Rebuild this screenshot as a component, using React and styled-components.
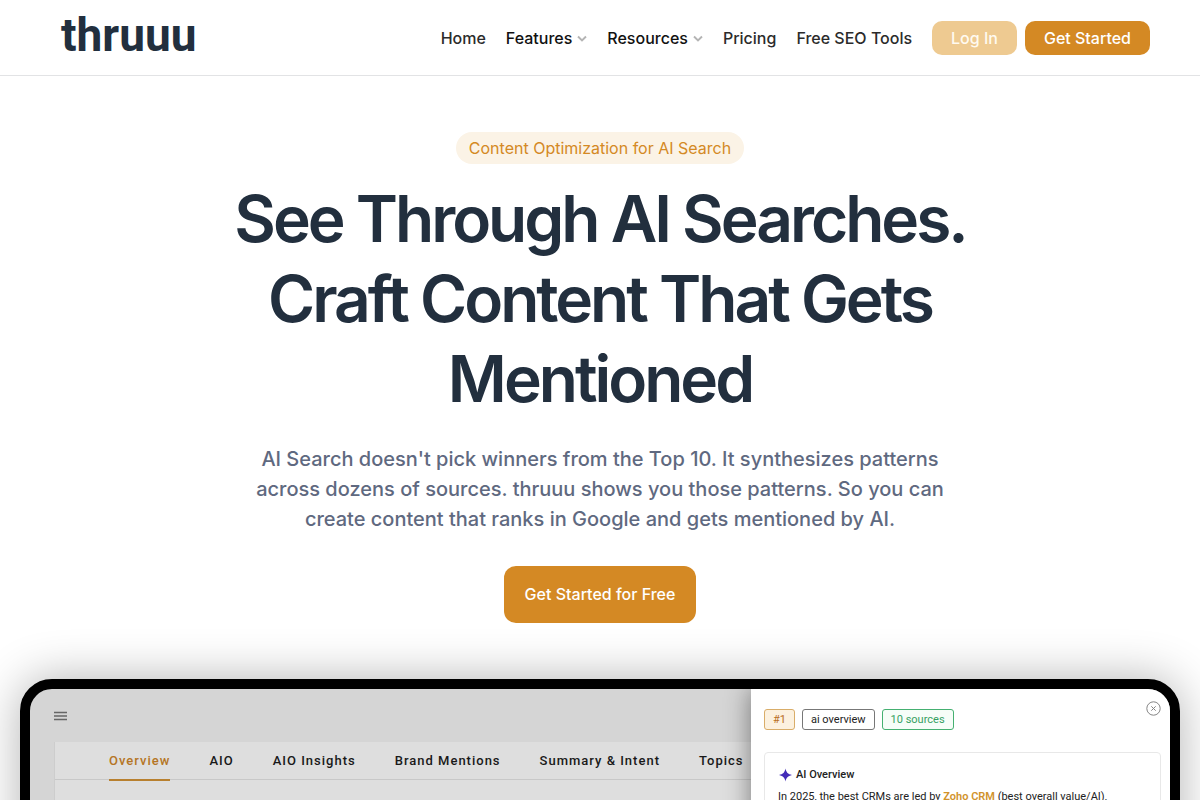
import styled, {createGlobalStyle} from "styled-components";

const GlobalStyle = createGlobalStyle`
    * {
        box-sizing: border-box;
    }

    body {
        margin: 0;
        background-color: #fff;
        color: #222f3e;
        font-family: Inter, "Liberation Sans", sans-serif;
        font-size: 16px;
        overflow-x: hidden;
    }

    button {
        font: inherit;
        cursor: pointer;
    }
`

const Header = styled.header`
    display: flex;
    align-items: center;
    justify-content: space-between;
    height: 76px;
    padding: 0 50px 0 61px;
    border-bottom: 1px solid #e2e3e5;
`

const Logo = styled.a`
    color: #222f3e;
    font-family: Roboto, sans-serif;
    font-size: 46px;
    font-weight: 700;
    line-height: 56px;
    padding-bottom: 6px;
    text-decoration: none;
`

const Nav = styled.nav`
    display: flex;
    align-items: center;
    gap: 20px;
`

const NavLink = styled.a`
    color: #2b2b2b;
    font-weight: 500;
    line-height: 24px;
    text-decoration: none;
`

const NavMenu = styled.button`
    display: flex;
    align-items: center;
    gap: 5px;
    padding: 0;
    border: none;
    background: none;
    color: #111;
    font-weight: 500;
    line-height: 24px;

    & svg {
        width: 10px;
        height: 10px;
    }
`

const Actions = styled.div`
    display: flex;
    gap: 8px;
`

const Button = styled.button`
    height: 34px;
    padding: 0 19px;
    border: none;
    border-radius: 10px;
    background-color: ${props => props.$muted ? "#eeca91" : "#d48924"};
    color: ${props => props.$muted ? "#fffaf0" : "#fff"};
    font-weight: 500;
    white-space: nowrap;
`

const LargeButton = styled(Button)`
    height: 57px;
    padding: 0 21px 2px;
    border-radius: 12px;
`

const Hero = styled.section`
    display: flex;
    flex-direction: column;
    align-items: center;
    padding: 56px 24px;
    text-align: center;
`

const Pill = styled.p`
    margin: 0;
    padding: 4px 13px;
    border-radius: 16px;
    background-color: #fbf3e6;
    color: #d48924;
    line-height: 24px;
`

const Title = styled.h1`
    max-width: 800px;
    margin: 15px 0 0;
    font-size: 64px;
    font-weight: 600;
    letter-spacing: -3px;
    line-height: 80px;
`

const Lead = styled.p`
    max-width: 700px;
    margin: 25px 0 32px;
    color: #5f6980;
    font-size: 20px;
    font-weight: 500;
    line-height: 30px;
`

const Device = styled.section`
    display: grid;
    grid-template-columns: 721fr 419fr;
    min-height: 600px;
    margin: 0 20px 40px;
    border: 10px solid #000;
    border-radius: 32px;
    background-color: #d5d5d5;
    box-shadow: 0 0 48px rgba(0, 0, 0, 0.3);
    overflow: hidden;
    font-family: Roboto, "Liberation Sans", sans-serif;
`

const Report = styled.div`
    display: flex;
    flex-direction: column;
    padding-left: 24px;
`

const Toolbar = styled.div`
    display: flex;
    align-items: center;
    height: 53px;
`

const IconButton = styled.button`
    display: flex;
    padding: 0;
    border: none;
    background: none;
    color: #666;
`

const Board = styled.div`
    flex: 1;
    border-left: 1px solid #cdcdcd;
    background-color: #dedede;
`

const Tabs = styled.div`
    display: flex;
    gap: 39px;
    height: 38px;
    padding-left: 54px;
    border-bottom: 1px solid #c8c8c8;
`

const Tab = styled.button`
    height: 39px;
    padding: 0;
    border: none;
    border-bottom: 2px solid ${props => props.$active ? "#b8802f" : "transparent"};
    background: none;
    color: ${props => props.$active ? "#b57524" : "#191919"};
    font-size: 13px;
    font-weight: 500;
    letter-spacing: 1px;
    white-space: nowrap;
`

const Panel = styled.aside`
    z-index: 1;
    padding: 0 9px 0 13px;
    background-color: #fff;
    box-shadow: 0 0 24px rgba(0, 0, 0, 0.45);
`

const PanelHeader = styled.div`
    display: flex;
    align-items: flex-start;
    justify-content: space-between;
    height: 63px;
    padding-top: 12px;
`

const Tags = styled.div`
    display: flex;
    gap: 7px;
    padding-top: 8px;
`

const Tag = styled.span`
    height: 21px;
    padding: 0 8px;
    border: 1px solid ${props => props.$border};
    border-radius: 3px;
    background-color: ${props => props.$fill || "#fff"};
    color: ${props => props.$color};
    font-size: 11px;
    font-weight: 400;
    line-height: 19px;
`

const Card = styled.article`
    min-height: 400px;
    padding: 11px 13px;
    border: 1px solid #e8e8e8;
    border-radius: 4px;
    color: #222;
    font-size: 11px;
    line-height: 22px;

    & a {
        color: #d1932c;
        font-weight: 600;
    }
`

const CardTitle = styled.h2`
    display: flex;
    align-items: center;
    gap: 3px;
    margin: 0;
    font-size: 11px;
    font-weight: 500;
    line-height: 22px;
`

const Answer = styled.p`
    margin: 0;
`

const Chevron = () => (
    <svg viewBox="0 0 10 10" fill="none" stroke="#b4b4b4" strokeWidth="1.9" aria-hidden="true">
        <path d="M1 3.5l4 4 4-4"/>
    </svg>
);

const MenuIcon = () => (
    <svg width="13" height="10" viewBox="0 0 13 10" stroke="currentColor" strokeWidth="1.5" aria-hidden="true">
        <path d="M0 1.5h13M0 5h13M0 8.5h13"/>
    </svg>
);

const CloseIcon = () => (
    <svg width="15" height="15" viewBox="0 0 15 15" fill="none" stroke="#858585" aria-hidden="true">
        <circle cx="7.5" cy="7.5" r="6.7"/>
        <path d="M5.3 5.3l4.4 4.4M9.7 5.3l-4.4 4.4"/>
    </svg>
);

const SparkIcon = () => (
    <svg width="15" height="14" viewBox="0 0 14 14" fill="#432cb8" aria-hidden="true">
        <path d="M7 0.5C7.9 4.5 9.2 6 13.5 7C9.2 8 7.9 9.5 7 13.5C6.1 9.5 4.8 8 0.5 7C4.8 6 6.1 4.5 7 0.5Z"/>
    </svg>
);

const tabs = ["Overview", "AIO", "AIO Insights", "Brand Mentions", "Summary & Intent", "Topics"];

const App = () => {
    return (
        <>
            <GlobalStyle/>
            <Header>
                <Logo href="#">thruuu</Logo>
                <Nav>
                    <NavLink href="#">Home</NavLink>
                    <NavMenu>Features <Chevron/></NavMenu>
                    <NavMenu>Resources <Chevron/></NavMenu>
                    <NavLink href="#">Pricing</NavLink>
                    <NavLink href="#">Free SEO Tools</NavLink>
                    <Actions>
                        <Button $muted>Log In</Button>
                        <Button>Get Started</Button>
                    </Actions>
                </Nav>
            </Header>

            <main>
                <Hero>
                    <Pill>Content Optimization for AI Search</Pill>
                    <Title>See Through AI Searches. Craft Content That Gets Mentioned</Title>
                    <Lead>
                        AI Search doesn't pick winners from the Top 10. It synthesizes patterns across
                        dozens of sources. thruuu shows you those patterns. So you can create content
                        that ranks in Google and gets mentioned by AI.
                    </Lead>
                    <LargeButton>Get Started for Free</LargeButton>
                </Hero>

                <Device>
                    <Report>
                        <Toolbar>
                            <IconButton aria-label="Menu"><MenuIcon/></IconButton>
                        </Toolbar>
                        <Board>
                            <Tabs role="tablist">
                                {tabs.map((tab, index) => (
                                    <Tab key={tab} role="tab" aria-selected={index === 0} $active={index === 0}>
                                        {tab}
                                    </Tab>
                                ))}
                            </Tabs>
                        </Board>
                    </Report>

                    <Panel>
                        <PanelHeader>
                            <Tags>
                                <Tag $border="#d9ad69" $fill="#fcf1df" $color="#b96f24">#1</Tag>
                                <Tag $border="#777" $color="#222">ai overview</Tag>
                                <Tag $border="#45b071" $fill="#f6fdf8" $color="#35a062">10 sources</Tag>
                            </Tags>
                            <IconButton aria-label="Close"><CloseIcon/></IconButton>
                        </PanelHeader>
                        <Card>
                            <CardTitle><SparkIcon/> AI Overview</CardTitle>
                            <Answer>
                                In 2025, the best CRMs are led by <a href="#">Zoho CRM</a> (best overall value/AI),
                            </Answer>
                        </Card>
                    </Panel>
                </Device>
            </main>
        </>
    );
};

export default App;
